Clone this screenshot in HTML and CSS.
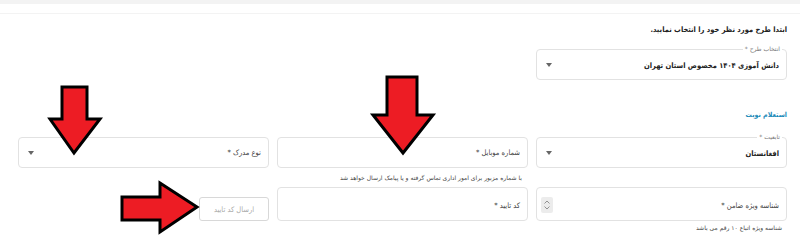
FILE: index.html
```html
<!DOCTYPE html>
<html lang="fa" dir="rtl">
<head>
<meta charset="utf-8">
<title>استعلام نوبت</title>
<link rel="stylesheet" href="styles.css">
</head>
<body>
<div class="page">
  <div class="topstrip"></div>
  <div class="subbar"></div>
  <main class="content">
    <h1 class="heading">ابتدا طرح مورد نظر خود را انتخاب نمایید.</h1>
    <div class="row-one">
      <div class="field field-select field-plan">
        <span class="float-label">انتخاب طرح *</span>
        <span class="value">دانش آموزی ۱۴۰۴ مخصوص استان تهران</span>
        <span class="caret"></span>
      </div>
    </div>
    <h2 class="section-title">استعلام نوبت</h2>
    <div class="form-grid">
      <div class="field field-select">
        <span class="float-label">تابعیت *</span>
        <span class="value">افغانستان</span>
        <span class="caret"></span>
      </div>
      <div class="field">
        <span class="placeholder">شماره موبایل *</span>
      </div>
      <div class="field field-select">
        <span class="placeholder">نوع مدرک *</span>
        <span class="caret"></span>
      </div>

      <div class="helper helper-mid"></div>
      <div class="helper helper-mid">با شماره مزبور برای امور اداری تماس گرفته و یا پیامک ارسال خواهد شد</div>
      <div class="helper helper-mid"></div>

      <div class="field field-tall">
        <span class="placeholder">شناسه ویژه ضامن *</span>
        <span class="spinner">
          <svg width="8" height="12" viewBox="0 0 8 12"><path d="M1.5 4.5 L4 2 L6.5 4.5 M1.5 7.5 L4 10 L6.5 7.5" fill="none" stroke="#888" stroke-width="0.9"/></svg>
        </span>
      </div>
      <div class="field field-tall">
        <span class="placeholder">کد تایید *</span>
      </div>
      <div class="btn-cell">
        <button class="btn-send" disabled>ارسال کد تایید</button>
      </div>

      <div class="helper helper-end">شناسه ویژه اتباع ۱۰ رقم می باشد</div>
      <div class="helper helper-end"></div>
      <div class="helper helper-end"></div>
    </div>
  </main>
  <svg class="arrows" width="800" height="239" viewBox="0 0 800 239">
    <polygon points="62,87 87,87 87,119 100,119 74,153 50,119 62,119" fill="#ed1c24" stroke="#000" stroke-width="3" stroke-linejoin="miter"/>
    <polygon points="387,77 417,77 417,115 433,115 403,153 373,115 387,115" fill="#ed1c24" stroke="#000" stroke-width="3" stroke-linejoin="miter"/>
    <polygon points="122,197 160,197 160,183 197,207 160,232 160,220 122,220" fill="#ed1c24" stroke="#000" stroke-width="3" stroke-linejoin="miter"/>
  </svg>
</div>
</body>
</html>
```
FILE: styles.css
```css
* { box-sizing: border-box; }
html, body { margin: 0; padding: 0; background: #fff; }
body {
  font-family: "DejaVu Sans Condensed", "DejaVu Sans", sans-serif;
  color: #222;
  width: 800px;
  height: 239px;
  overflow: hidden;
}
.page { position: relative; width: 800px; height: 239px; }
.topstrip { height: 4px; background: #f3f3f3; }
.subbar { height: 10px; border-bottom: 1px solid #f3f3f3; }
.content { padding: 8px 13px 0 18px; }
.heading {
  margin: 0;
  font-size: 7.5px;
  line-height: 16px;
  font-weight: bold;
  color: #222;
}
.row-one {
  display: grid;
  grid-template-columns: repeat(3, 1fr);
  column-gap: 8px;
  margin-top: 11px;
}
.field {
  position: relative;
  height: 31px;
  border: 1px solid #e2e2e2;
  border-radius: 4px;
  display: flex;
  align-items: center;
  padding: 0 7px 0 9px;
  background: #fff;
}
.field-tall { height: 34px; padding-top: 2px; }
.float-label {
  position: absolute;
  top: -5px;
  right: 4px;
  padding: 0 2px;
  background: #fff;
  font-family: "DejaVu Sans", sans-serif;
  font-size: 6px;
  line-height: 8px;
  color: #777;
}
.value {
  font-size: 7.5px;
  font-weight: bold;
  color: #222;
  padding-top: 2px;
}
.placeholder {
  font-size: 7.5px;
  color: #444;
}
.caret {
  margin-right: auto;
  width: 0;
  height: 0;
  border-left: 3.5px solid transparent;
  border-right: 3.5px solid transparent;
  border-top: 4px solid #666;
}
.spinner {
  margin-right: auto;
  width: 12px;
  height: 16px;
  background: #ececec;
  border-radius: 2px;
  display: flex;
  align-items: center;
  justify-content: center;
  margin-left: -5px;
}
.spinner svg { display: block; }
.section-title {
  margin: 27px 0 0;
  font-size: 7px;
  line-height: 16px;
  font-weight: bold;
  color: #1b8ab8;
}
.form-grid {
  display: grid;
  grid-template-columns: repeat(3, 1fr);
  column-gap: 8px;
  margin-top: 14px;
}
.helper {
  font-family: "DejaVu Sans", sans-serif;
  font-size: 6px;
  color: #444;
}
.helper-mid { height: 19px; padding-top: 5px; padding-right: 6px; line-height: 10px; }
.helper-end { padding-top: 2px; padding-right: 5px; line-height: 10px; }
.btn-cell {
  display: flex;
  justify-content: flex-start;
  align-items: flex-end;
}
.btn-send {
  width: 70px;
  height: 24px;
  border: 1px solid #d8d8d8;
  border-radius: 3px;
  background: #fff;
  color: #aaa;
  font-family: "DejaVu Sans Condensed", "DejaVu Sans", sans-serif;
  font-size: 7.5px;
  padding: 0;
}
.arrows {
  position: absolute;
  top: 0;
  left: 0;
  pointer-events: none;
}
```
